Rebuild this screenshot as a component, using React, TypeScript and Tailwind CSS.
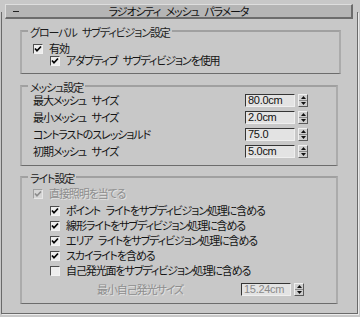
import React from 'react';

const JP =
  "font-['Noto_Sans_CJK_JP',sans-serif] [font-feature-settings:'palt'] text-[11px] leading-[13px] tracking-[-1.1px] [word-spacing:4px] whitespace-nowrap";

function Check({ checked = false, disabled = false }: { checked?: boolean; disabled?: boolean }) {
  return (
    <span
      className={`flex h-[10px] w-[10px] shrink-0 items-center justify-center border ${
        disabled
          ? 'border-t-[#a0a0a0] border-l-[#a0a0a0] border-b-[#e6e6e6] border-r-[#e6e6e6] bg-[#d6d6d6]'
          : 'border-t-[#4e4e4e] border-l-[#4e4e4e] border-b-[#f2f2f2] border-r-[#f2f2f2] bg-[#ededed]'
      }`}
    >
      {checked && (
        <svg width="8" height="8" viewBox="0 0 8 8">
          <path d="M1 3.5 L3 5.8 L7 1.5" stroke={disabled ? '#8c8c8c' : '#000'} strokeWidth="1.7" fill="none" />
        </svg>
      )}
    </span>
  );
}

function Spinner({ value, disabled = false }: { value: string; disabled?: boolean }) {
  return (
    <div className="flex items-center">
      <div
        className={`h-[13px] w-[50px] border border-t-[#353535] border-l-[#353535] border-b-[#efefef] border-r-[#efefef] bg-[#e3e3e3] pl-[2px] font-['Liberation_Sans',sans-serif] text-[11px] leading-[11px] tracking-[-0.3px] ${
          disabled ? 'text-[#8a8a8a]' : 'text-[#111]'
        }`}
      >
        {value}
      </div>
      <div className="ml-[3px] flex h-[13px] w-[10px] flex-col border border-t-[#f0f0f0] border-l-[#f0f0f0] border-b-[#5a5a5a] border-r-[#5a5a5a] bg-[#cfcfcf]">
        <div className="flex flex-1 items-center justify-center border-b border-[#8c8c8c]">
          <svg width="5" height="3" viewBox="0 0 5 3">
            <path d="M0 3 L2.5 0 L5 3 Z" fill="#111" />
          </svg>
        </div>
        <div className="flex flex-1 items-center justify-center">
          <svg width="5" height="3" viewBox="0 0 5 3">
            <path d="M0 0 L2.5 3 L5 0 Z" fill="#111" />
          </svg>
        </div>
      </div>
    </div>
  );
}

function Group({ label, className, children }: { label: string; className: string; children: React.ReactNode }) {
  return (
    <div
      className={`relative ml-[18px] border-2 border-t-[#a0a0a0] border-l-[#ababab] border-r-[#ababab] border-b border-b-[#6c6c6c] ${className}`}
    >
      <span className={`absolute left-[6px] top-[-6px] bg-[#c8c8c8] px-[2px] text-[#1c1c1c] ${JP} leading-[11px]`}>{label}</span>
      {children}
    </div>
  );
}

function Row({ indent, checked, disabled, label }: { indent: string; checked?: boolean; disabled?: boolean; label: string }) {
  return (
    <div className={`flex h-[15px] items-center gap-[6px] ${indent}`}>
      <Check checked={checked} disabled={disabled} />
      <span className={`${JP} ${disabled ? 'text-[#8e8e8e] [text-shadow:1px_1px_0_#e2e2e2]' : 'text-[#141414]'}`}>{label}</span>
    </div>
  );
}

const meshRows = [
  { label: '最大メッシュ サイズ', value: '80.0cm' },
  { label: '最小メッシュ サイズ', value: '2.0cm' },
  { label: 'コントラストのスレッショルド', value: '75.0' },
  { label: '初期メッシュ サイズ', value: '5.0cm' },
];

const lightRows = [
  { label: 'ポイント ライトをサブディビジョン処理に含める', checked: true },
  { label: '線形ライトをサブディビジョン処理に含める', checked: true },
  { label: 'エリア ライトをサブディビジョン処理に含める', checked: true },
  { label: 'スカイライトを含める', checked: true },
  { label: '自己発光面をサブディビジョン処理に含める', checked: false },
];

export default function App() {
  return (
    <div className="relative h-[317px] w-[360px] overflow-hidden bg-[#c8c8c8] pt-[12px]">
      <div className="ml-[1px] h-[302px] w-[357px] border-x border-b border-[#6a6a6a] pt-[18px] shadow-[1px_1px_0_#ececec]">
        <Group label="グローバル サブディビジョン設定" className="h-[44px] w-[321px] pt-[9px]">
          <Row indent="pl-[11px]" checked label="有効" />
          <Row indent="pl-[28px] -mt-[3px]" checked label="アダプティブ サブディビジョンを使用" />
        </Group>

        <Group label="メッシュ設定" className="mt-[11px] h-[81px] w-[318px] pt-[7px]">
          {meshRows.map((r) => (
            <div key={r.label} className="flex h-[17px] items-start">
              <span className={`w-[223px] pl-[11px] text-[#141414] ${JP}`}>{r.label}</span>
              <Spinner value={r.value} />
            </div>
          ))}
        </Group>

        <Group label="ライト設定" className="mt-[10px] h-[128px] w-[318px] pt-[8px]">
          <Row indent="pl-[11px] gap-[5px]" checked disabled label="直接照明を当てる" />
          <div className="mt-[2px]">
            {lightRows.map((r) => (
              <Row key={r.label} indent="pl-[28px]" checked={r.checked} label={r.label} />
            ))}
          </div>
          <div className="mt-[5px] flex h-[13px] items-center">
            <span className={`w-[219px] pl-[75px] text-[#8e8e8e] [text-shadow:1px_1px_0_#e2e2e2] ${JP}`}>最小自己発光サイズ</span>
            <Spinner value="15.24cm" disabled />
          </div>
        </Group>
      </div>

      <div className="absolute left-[5px] top-[4px] flex h-[15px] w-[348px] items-center border border-t-[#dedede] border-l-[#dedede] border-b-2 border-r-2 border-b-[#6c6c6c] border-r-[#6c6c6c] bg-[#b5b5b5]">
        <div className="ml-[7px] h-[1px] w-[6px] bg-[#222]" />
        <span className={`flex-1 pr-[13px] text-center text-[#111] ${JP}`}>ラジオシティ メッシュ パラメータ</span>
      </div>
    </div>
  );
}
